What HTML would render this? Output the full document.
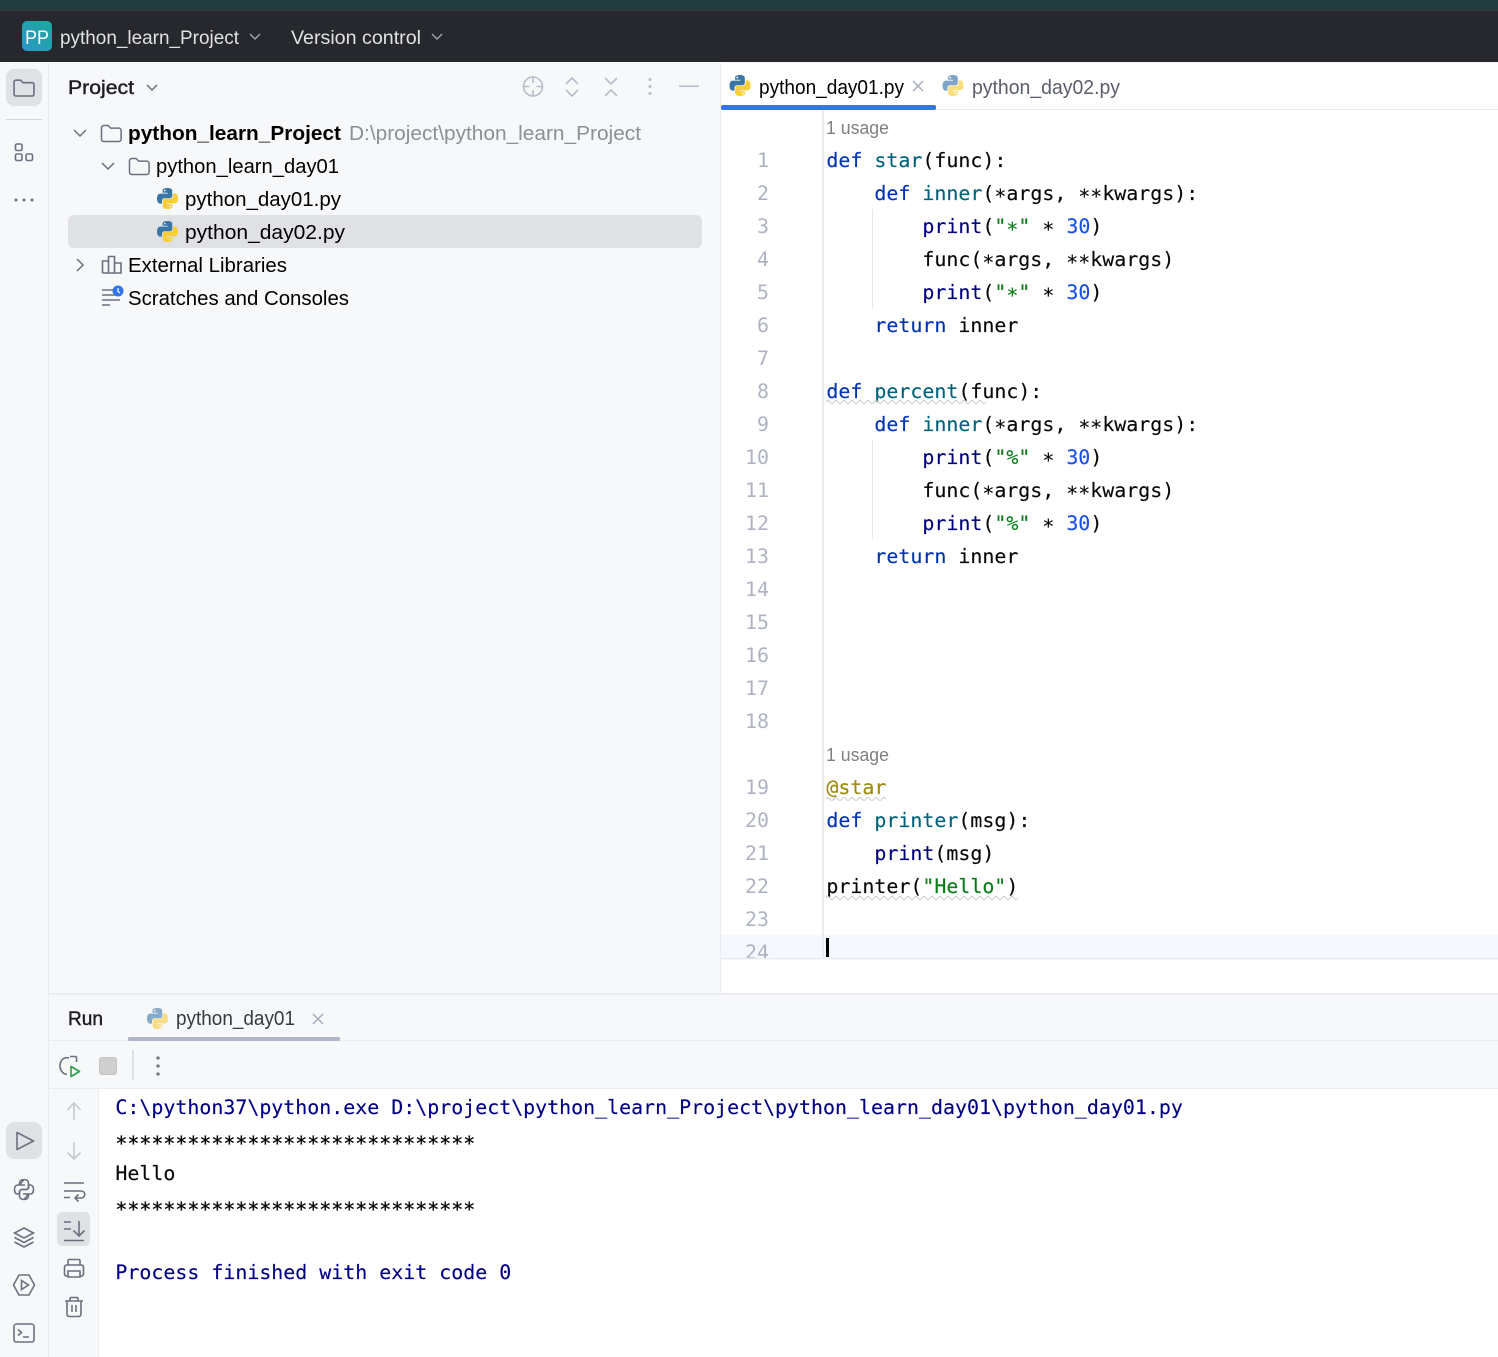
<!DOCTYPE html>
<html lang="en"><head><meta charset="utf-8"><title>python_learn_Project</title>
<style>
html,body{margin:0;padding:0;background:#fff;width:1498px;height:1357px;overflow:hidden}
svg{display:block}
.ui{font-family:"Liberation Sans",sans-serif;font-size:20px;fill:#000}
.c{font-family:"DejaVu Sans Mono","Liberation Mono",monospace;font-size:19.93px;fill:#080808;stroke:#080808;stroke-width:.15;white-space:pre}
.n{font-family:"DejaVu Sans Mono","Liberation Mono",monospace;font-size:19.93px;fill:#aeb3c2}
.k{fill:#0033b3;stroke:#0033b3}.f{fill:#00627a;stroke:#00627a}.p{fill:#000080;stroke:#000080}.s{fill:#067d17;stroke:#067d17}.d{fill:#1750eb;stroke:#1750eb}.a{fill:#9e880d;stroke:#9e880d}
.i{fill:none;stroke:#6c707e;stroke-width:1.6}
.l{fill:none;stroke:#a8adbd;stroke-width:1.6}
.m{font-weight:normal;font-size:19.5px;fill:#1e1f22;stroke:#1e1f22;stroke-width:.45}
</style></head><body>
<svg width="1498" height="1357" viewBox="0 0 1498 1357" xmlns="http://www.w3.org/2000/svg" xml:space="preserve">
<defs>
<linearGradient id="pp" x1="0" y1="1" x2="1" y2="0"><stop offset="0" stop-color="#2a97c8"/><stop offset="1" stop-color="#1fa79a"/></linearGradient>
<g id="py">
<path fill="#3a75a8" d="M10.5 0C5.5 0 5.6 2.2 5.6 2.2V4.8H10.7V5.6H3.4C3.4 5.6 0 5.2 0 10.5S3 15.6 3 15.6H5V13C5 13 4.9 10.3 7.7 10.3H12.6C12.6 10.3 15.3 10.4 15.3 7.8V3C15.3 3 15.7 0 10.5 0ZM7.8 1.6A.9.9 0 1 1 7.8 3.4A.9.9 0 0 1 7.8 1.6Z"/>
<path fill="#f8cd3a" d="M10.5 21C15.5 21 15.4 18.8 15.4 18.8V16.2H10.3V15.4H17.6C17.6 15.4 21 15.8 21 10.5S18 5.4 18 5.4H16V8C16 8 16.1 10.7 13.3 10.7H8.4C8.4 10.7 5.7 10.6 5.7 13.2V18C5.7 18 5.3 21 10.5 21ZM13.2 19.4A.9.9 0 1 1 13.2 17.6A.9.9 0 0 1 13.2 19.4Z"/>
</g>
<g id="folder"><path d="M1 4.5C1 3.1 2 2 3.4 2H7.6L10.2 4.6H18.2C19.6 4.6 20.6 5.6 20.6 7V15.6C20.6 17 19.6 18 18.2 18H3.4C2 18 1 17 1 15.6Z" fill="#f7f8fa" stroke="#6c707e" stroke-width="1.5"/></g>
<path id="snake" d="M24 1179.500C20.500 1179.500 19.500 1181 19.500 1183.500V1185H25M19.500 1185H18C15.500 1185 14.500 1187 14.500 1189.500C14.500 1192 15.500 1194 18 1194H19.500V1192C19.500 1190.500 20.500 1189.500 22 1189.500H26C27.500 1189.500 28.500 1188.500 28.500 1187V1183.500C28.500 1181 27.500 1179.500 24 1179.500Z"/>
</defs>

<!-- backgrounds -->
<rect width="1498" height="1357" fill="#f7f8fa"/>
<rect width="1498" height="10" fill="#213d40"/>
<rect y="10" width="1498" height="1" fill="#3a3c42"/>
<rect y="11" width="1498" height="51" fill="#27282e"/>
<rect x="48" y="62" width="1" height="1295" fill="#ebecf0"/>
<rect x="721" y="63" width="777" height="930" fill="#fff"/>
<rect x="720" y="63" width="1" height="930" fill="#ebecf0"/>
<rect x="721" y="109" width="777" height="1" fill="#ebecf0"/>
<rect x="721" y="935" width="777" height="23" fill="#f5f8fe"/>
<rect x="822" y="110" width="2" height="848" fill="#ebecf0"/>
<rect x="721" y="958" width="777" height="1.500" fill="#ebecf0"/>
<rect x="49" y="993" width="1449" height="2" fill="#ebecf0"/>
<rect x="49" y="1040" width="1449" height="1" fill="#ebecf0"/>
<rect x="49" y="1088" width="1449" height="1" fill="#ebecf0"/>
<rect x="99" y="1089" width="1399" height="268" fill="#fff"/>
<rect x="98" y="1089" width="1" height="268" fill="#ebecf0"/>

<!-- title bar -->
<rect x="22" y="21" width="30" height="30" rx="5" fill="url(#pp)"/>
<text class="ui" x="25" y="44" style="fill:#fff;font-size:19px" textLength="24" lengthAdjust="spacingAndGlyphs">PP</text>
<text class="ui" x="60" y="44" style="fill:#dfe1e5;font-size:19.5px" textLength="179" lengthAdjust="spacingAndGlyphs">python_learn_Project</text>
<path d="M250 34L255 39L260 34" fill="none" stroke="#9da0a8" stroke-width="1.5"/>
<text class="ui" x="291" y="44" style="fill:#dfe1e5;font-size:19.5px" textLength="130" lengthAdjust="spacingAndGlyphs">Version control</text>
<path d="M432 34L437 39L442 34" fill="none" stroke="#9da0a8" stroke-width="1.5"/>

<!-- left stripe -->
<rect x="6" y="69" width="36" height="37" rx="8" fill="#dfe1e5"/>
<path class="i" d="M14 82C14 81 14.8 80.2 15.8 80.2H20.5L23 82.7H32C33.2 82.7 34 83.5 34 84.7V94C34 95.2 33.2 96 32 96H15.8C14.8 96 14 95.2 14 94Z"/>
<rect x="6" y="119" width="36" height="1" fill="#d3d5db"/>
<rect class="i" x="15.5" y="144" width="6.5" height="6.5" rx="1.5"/><rect class="i" x="15.5" y="154" width="6.5" height="6.5" rx="1.5"/><rect class="i" x="26" y="154" width="6.5" height="6.5" rx="1.5"/>
<circle cx="16" cy="200" r="1.5" fill="#6c707e"/><circle cx="24" cy="200" r="1.5" fill="#6c707e"/><circle cx="32" cy="200" r="1.5" fill="#6c707e"/>
<rect x="6" y="1122" width="36" height="37" rx="8" fill="#dfe1e5"/>
<path class="i" d="M17 1132.5V1149.5L33.5 1141Z" stroke-linejoin="round"/>
<use href="#snake" class="i"/><use href="#snake" class="i" transform="rotate(180 24 1189.500)"/>
<g class="i"><path d="M24 1228L33.500 1233L24 1238L14.500 1233Z"/><path d="M14.500 1237.500L24 1242.500L33.500 1237.500"/><path d="M14.500 1242L24 1247L33.500 1242"/></g>
<path class="i" d="M19 1275H29L34.500 1285L29 1295H19L13.500 1285Z"/><path class="i" d="M21.500 1280.500V1289.500L28.500 1285Z"/>
<rect class="i" x="14" y="1324" width="20" height="18" rx="2.500"/><path class="i" d="M18 1329.500L21.500 1332.500L18 1335.500M23 1337H29"/>

<!-- project header -->
<text class="ui m" x="68" y="94" textLength="66" lengthAdjust="spacingAndGlyphs">Project</text>
<path d="M147 85L152 90L157 85" fill="none" stroke="#6c707e" stroke-width="1.500"/>
<g class="l" style="stroke:#b8bcc8"><circle cx="533" cy="86.500" r="9.500"/><path d="M533 77V83M533 90V96M523.500 86.500H529.500M536.500 86.500H542.500"/>
<path d="M566 84L572 78L578 84M566 90L572 96L578 90"/><path d="M605 78L611 84L617 78M605 96L611 90L617 96"/></g>
<circle cx="650" cy="79.500" r="1.500" fill="#b8bcc8"/><circle cx="650" cy="86.500" r="1.500" fill="#b8bcc8"/><circle cx="650" cy="93.500" r="1.500" fill="#b8bcc8"/>
<rect x="679" y="85.500" width="20" height="1.500" fill="#b8bcc8"/>

<!-- tree -->
<rect x="68" y="215" width="634" height="33" rx="6" fill="#dfe1e5"/>
<path d="M74 130L80 136L86 130" fill="none" stroke="#6c707e" stroke-width="1.500"/>
<use href="#folder" x="100.500" y="123.500"/>
<text class="ui" x="128" y="140" style="font-weight:bold" textLength="213" lengthAdjust="spacingAndGlyphs">python_learn_Project</text>
<text class="ui" x="349" y="140" style="fill:#8c8f98" textLength="292" lengthAdjust="spacingAndGlyphs">D:\project\python_learn_Project</text>
<path d="M102 163L108 169L114 163" fill="none" stroke="#6c707e" stroke-width="1.500"/>
<use href="#folder" x="128.500" y="156.500"/>
<text class="ui" x="156" y="173" textLength="183" lengthAdjust="spacingAndGlyphs">python_learn_day01</text>
<use href="#py" x="157" y="188"/>
<text class="ui" x="185" y="206" textLength="156" lengthAdjust="spacingAndGlyphs">python_day01.py</text>
<use href="#py" x="157" y="221"/>
<text class="ui" x="185" y="239" textLength="160" lengthAdjust="spacingAndGlyphs">python_day02.py</text>
<path d="M77 259L83 265L77 271" fill="none" stroke="#6c707e" stroke-width="1.500"/>
<g class="i"><path d="M102.500 273V261H108.500V273M108.500 273V256.500H114.500V273M114.500 263H121V273H102.500"/></g>
<text class="ui" x="128" y="272" textLength="159" lengthAdjust="spacingAndGlyphs">External Libraries</text>
<path class="i" d="M102 290H113M102 295H116M102 300H120M102 305H110"/>
<circle cx="118" cy="291" r="5.500" fill="#3574f0"/><path d="M118 288V291.500L120 293" stroke="#fff" stroke-width="1.200" fill="none"/>
<text class="ui" x="128" y="305" textLength="221" lengthAdjust="spacingAndGlyphs">Scratches and Consoles</text>

<!-- editor tabs -->
<use href="#py" x="729.500" y="75"/>
<text class="ui" x="759" y="94" textLength="145" lengthAdjust="spacingAndGlyphs">python_day01.py</text>
<path d="M913 81L923 91M923 81L913 91" stroke="#a8adbd" stroke-width="1.500" fill="none"/>
<rect x="721" y="105" width="215" height="5" rx="2" fill="#3574f0"/>
<g opacity=".65"><use href="#py" x="942.500" y="75"/></g>
<text class="ui" x="972" y="94" style="fill:#5a5d6b" textLength="148" lengthAdjust="spacingAndGlyphs">python_day02.py</text>

<!-- indent guides -->
<rect x="872" y="209" width="1" height="99" fill="#e6e7ea"/>
<rect x="872" y="440" width="1" height="99" fill="#e6e7ea"/>

<!-- line numbers -->
<g class="n" text-anchor="end">
<text x="769" y="167">1</text><text x="769" y="200">2</text><text x="769" y="233">3</text><text x="769" y="266">4</text><text x="769" y="299">5</text><text x="769" y="332">6</text><text x="769" y="365">7</text><text x="769" y="398">8</text><text x="769" y="431">9</text><text x="769" y="464">10</text><text x="769" y="497">11</text><text x="769" y="530">12</text><text x="769" y="563">13</text><text x="769" y="596">14</text><text x="769" y="629">15</text><text x="769" y="662">16</text><text x="769" y="695">17</text><text x="769" y="728">18</text><text x="769" y="794">19</text><text x="769" y="827">20</text><text x="769" y="860">21</text><text x="769" y="893">22</text><text x="769" y="926">23</text>
</g>
<svg x="721" y="930" width="100" height="28" viewBox="721 930 100 28"><text class="n" x="769" y="959" text-anchor="end">24</text></svg>

<!-- code -->
<text class="ui" x="826" y="134" style="font-size:18px;fill:#808080" textLength="63" lengthAdjust="spacingAndGlyphs">1 usage</text>
<text class="c" x="826.400" y="167"><tspan class="k">def</tspan> <tspan class="f">star</tspan>(func):</text>
<text class="c" x="826.400" y="200">    <tspan class="k">def</tspan> <tspan class="f">inner</tspan>(<tspan dy="3">*</tspan><tspan dy="-3">args, </tspan><tspan dy="3">**</tspan><tspan dy="-3">kwargs):</tspan></text>
<text class="c" x="826.400" y="233">        <tspan class="p">print</tspan>(<tspan class="s">"<tspan dy="3">*</tspan><tspan dy="-3">"</tspan></tspan> <tspan dy="3">*</tspan><tspan dy="-3"> </tspan><tspan class="d">30</tspan>)</text>
<text class="c" x="826.400" y="266">        func(<tspan dy="3">*</tspan><tspan dy="-3">args, </tspan><tspan dy="3">**</tspan><tspan dy="-3">kwargs)</tspan></text>
<text class="c" x="826.400" y="299">        <tspan class="p">print</tspan>(<tspan class="s">"<tspan dy="3">*</tspan><tspan dy="-3">"</tspan></tspan> <tspan dy="3">*</tspan><tspan dy="-3"> </tspan><tspan class="d">30</tspan>)</text>
<text class="c" x="826.400" y="332">    <tspan class="k">return</tspan> inner</text>
<text class="c" x="826.400" y="398"><tspan class="k">def</tspan> <tspan class="f">percent</tspan>(func):</text>
<text class="c" x="826.400" y="431">    <tspan class="k">def</tspan> <tspan class="f">inner</tspan>(<tspan dy="3">*</tspan><tspan dy="-3">args, </tspan><tspan dy="3">**</tspan><tspan dy="-3">kwargs):</tspan></text>
<text class="c" x="826.400" y="464">        <tspan class="p">print</tspan>(<tspan class="s">"%"</tspan> <tspan dy="3">*</tspan><tspan dy="-3"> </tspan><tspan class="d">30</tspan>)</text>
<text class="c" x="826.400" y="497">        func(<tspan dy="3">*</tspan><tspan dy="-3">args, </tspan><tspan dy="3">**</tspan><tspan dy="-3">kwargs)</tspan></text>
<text class="c" x="826.400" y="530">        <tspan class="p">print</tspan>(<tspan class="s">"%"</tspan> <tspan dy="3">*</tspan><tspan dy="-3"> </tspan><tspan class="d">30</tspan>)</text>
<text class="c" x="826.400" y="563">    <tspan class="k">return</tspan> inner</text>
<text class="ui" x="826" y="761" style="font-size:18px;fill:#808080" textLength="63" lengthAdjust="spacingAndGlyphs">1 usage</text>
<text class="c" x="826.400" y="794"><tspan class="a">@star</tspan></text>
<text class="c" x="826.400" y="827"><tspan class="k">def</tspan> <tspan class="f">printer</tspan>(msg):</text>
<text class="c" x="826.400" y="860">    <tspan class="p">print</tspan>(msg)</text>
<text class="c" x="826.400" y="893">printer(<tspan class="s">"Hello"</tspan>)</text>
<rect x="826" y="938" width="3" height="19" fill="#000"/>
<!-- weak-warning squiggles -->
<g fill="none" stroke="#c9c9c9" stroke-width="1">
<path d="M826 402q2-3 4 0t4 0t4 0t4 0t4 0t4 0t4 0t4 0t4 0t4 0t4 0t4 0t4 0t4 0t4 0t4 0t4 0t4 0t4 0t4 0t4 0t4 0t4 0t4 0t4 0t4 0t4 0t4 0t4 0t4 0t4 0t4 0t4 0t4 0t4 0t4 0t4 0t4 0t4 0t4 0"/>
<path d="M826 799q2-3 4 0t4 0t4 0t4 0t4 0t4 0t4 0t4 0t4 0t4 0t4 0t4 0t4 0t4 0t4 0"/>
<path d="M826 898q2-3 4 0t4 0t4 0t4 0t4 0t4 0t4 0t4 0t4 0t4 0t4 0t4 0t4 0t4 0t4 0t4 0t4 0t4 0t4 0t4 0t4 0t4 0t4 0t4 0t4 0t4 0t4 0t4 0t4 0t4 0t4 0t4 0t4 0t4 0t4 0t4 0t4 0t4 0t4 0t4 0t4 0t4 0t4 0t4 0t4 0t4 0t4 0t4 0"/>
</g>

<!-- run tabs -->
<text class="ui m" x="68" y="1025" textLength="35" lengthAdjust="spacingAndGlyphs">Run</text>
<g opacity=".6"><use href="#py" x="147" y="1008"/></g>
<text class="ui" x="176" y="1025" style="fill:#383a42" textLength="119" lengthAdjust="spacingAndGlyphs">python_day01</text>
<path d="M313 1014L323 1024M323 1014L313 1024" stroke="#a8adbd" stroke-width="1.500" fill="none"/>
<rect x="128" y="1037" width="212" height="4" rx="1.500" fill="#afb5c6"/>

<!-- run toolbar -->
<path class="i" d="M69 1058C64 1056.500 60 1060 60 1066C60 1070.500 63 1074 67 1074.500M70 1056.500H76.500M76.500 1056.500V1062"/>
<path d="M71 1066.500V1076.500L79.500 1071.500Z" fill="none" stroke="#2a9d46" stroke-width="1.600" stroke-linejoin="round"/>
<rect x="99.500" y="1057.500" width="17" height="17" rx="2.500" fill="#cfcfcf" stroke="#c4c4c4"/>
<rect x="132" y="1050" width="2" height="30" fill="#dfe1e5"/>
<circle cx="158" cy="1058" r="1.600" fill="#6c707e"/><circle cx="158" cy="1066" r="1.600" fill="#6c707e"/><circle cx="158" cy="1074" r="1.600" fill="#6c707e"/>

<!-- console side tools -->
<rect x="57" y="1212" width="33" height="34" rx="5" fill="#dfe1e5"/>
<g class="l" style="stroke:#c5c8d0"><path d="M74 1103V1120M67.500 1110L74 1103L80.500 1110"/><path d="M74 1142V1159M67.500 1152.500L74 1159L80.500 1152.500"/></g>
<g class="i"><path d="M64 1183H84M64 1191H81C86 1191 86 1198 81 1198H75M78.500 1194.500L75 1198L78.500 1201.500M64 1197.500H70"/>
<path d="M64 1222H71M64 1229H71M79 1221V1236M73.500 1230.500L79 1236L84.500 1230.500M64 1240.500H84"/>
<path d="M68 1265V1260.500C68 1260 68.500 1259.500 69 1259.500H79C79.500 1259.500 80 1260 80 1260.500V1265M68 1276H66.500C65.500 1276 64.500 1275 64.500 1274V1267C64.500 1266 65.500 1265 66.500 1265H81.500C82.500 1265 83.500 1266 83.500 1267V1274C83.500 1275 82.500 1276 81.500 1276H80M68 1271H80V1277H68Z"/>
<path d="M65 1301H83M70 1301V1298.500C70 1297.800 70.500 1297.500 71 1297.500H77C77.500 1297.500 78 1297.800 78 1298.500V1301M67 1301V1314C67 1315.500 68 1316.500 69.500 1316.500H78.500C80 1316.500 81 1315.500 81 1314V1301M72 1305V1312M76 1305V1312"/></g>

<!-- console -->
<text class="c p" x="115.400" y="1114">C:\python37\python.exe D:\project\python_learn_Project\python_learn_day01\python_day01.py</text>
<text class="c" x="115.400" y="1150" style="stroke-width:.35">******************************</text>
<text class="c" x="115.400" y="1180">Hello</text>
<text class="c" x="115.400" y="1216" style="stroke-width:.35">******************************</text>
<text class="c p" x="115.400" y="1279">Process finished with exit code 0</text>
</svg>
</body></html>
